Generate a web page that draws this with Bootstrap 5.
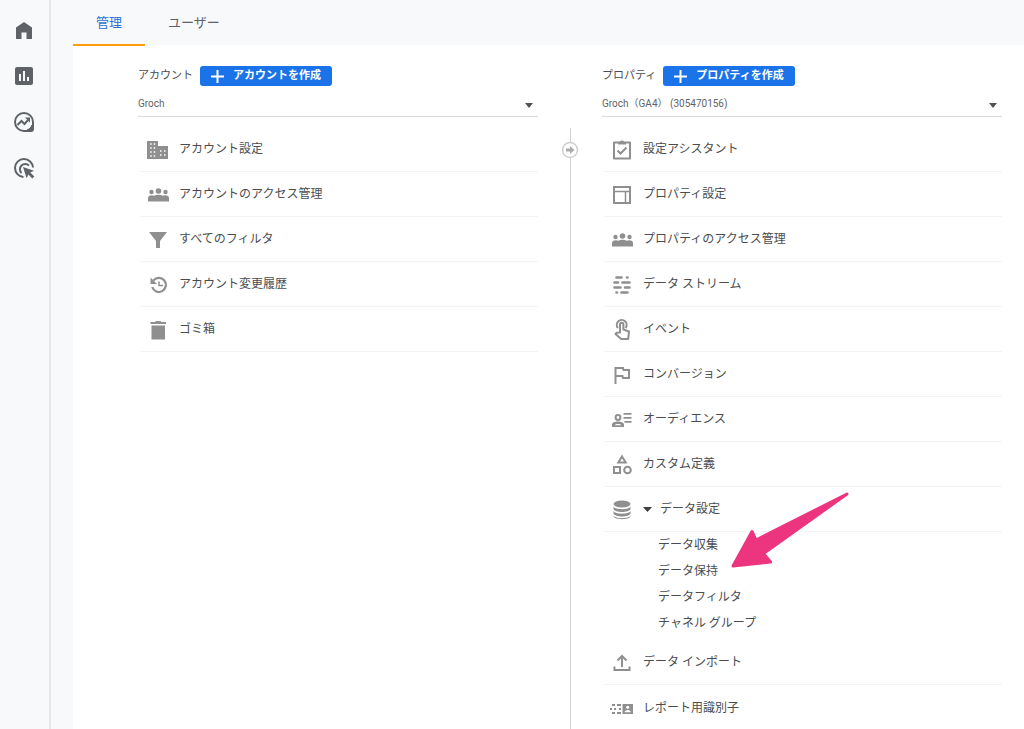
<!DOCTYPE html>
<html lang="ja">
<head>
<meta charset="utf-8">
<meta name="viewport" content="width=device-width, initial-scale=1">
<title>管理</title>
<link href="https://cdn.jsdelivr.net/npm/bootstrap@5.3.0/dist/css/bootstrap.min.css" rel="stylesheet">
<style>
  body { font-family: Roboto, "Noto Sans CJK JP", sans-serif; font-size: 12px; color: #4a4d50; background: #f8f9fb; }
  a { color: inherit; text-decoration: none; }
  svg { display: block; flex: none; }
  .side-rail { width: 51px; border-right: 2px solid #e4e6e9; color: #5f6368; padding: 18px 0 0 12px; gap: 22px; }
  .page-tabs { height: 45px; padding-left: 22px; font-size: 13px; }
  .page-tabs .nav-link { height: 46px; color: #5f6266; padding: 13px 23px 0; line-height: 20px; border-radius: 0; }
  .page-tabs .nav-link.active { position: relative; color: #2a72d5; border-bottom: 2px solid #ff9d0a; }
  .admin-panel { margin-left: 22px; padding: 20px 22px 0 65px; display: grid; grid-template-columns: minmax(0,1fr) 64px minmax(0,1fr); }
  .scope-title { height: 22px; font-size: 11px; gap: 7px; }
  .btn-create { height: 20px; width: 132px; padding: 0 0 0 10px; gap: 9px; border-radius: 3px; font-size: 11px; font-weight: 700; line-height: 20px; background: #1a73e8; color: #fff; }
  .btn-create:hover { background: #1765cc; color: #fff; }
  .scope-select { height: 30px; margin-bottom: 10px; padding: 4px 20px 0 0; font-size: 10px; color: #5f6368; border: 0; border-bottom: 1px solid #d8dadd; border-radius: 0;
    background: #fff url("data:image/svg+xml,%3Csvg xmlns='http://www.w3.org/2000/svg' viewBox='0 0 8 5'%3E%3Cpath d='M0 0h8L4 5z' fill='%23505356'/%3E%3C/svg%3E") no-repeat right 5px top 16px / 8px 5px; }
  .menu-row { height: 45px; padding: 0 0 0 6px; gap: 9px; border-bottom: 1px solid #f3f3f4; line-height: 20px; }
  .menu-list { margin-left: 2px; }
  .menu-list svg.row-icon { width: 24px; height: 24px; fill: #8f8f8f; stroke-width: 2; margin-top: 2px; }
  .caret { width: 9px; height: 5px; fill: #3c4043; }
  .sub-list { padding: 0 0 4px 54px; line-height: 26px; }
  .toggle-row { width: 100%; background: none; border: 0; border-bottom: 1px solid #f3f3f4; color: inherit; text-align: left; }
  .pointer-arrow { position: absolute; left: 72px; top: -68px; }
  .divider-col { margin-top: 63px; }
  .divider-col::before { content: ""; width: 1px; background: #d2d3d5; }
  .btn-move { position: absolute; top: 13px; width: 18px; height: 18px; padding: 0; border: 0; background: none; }
</style>
</head>
<body>
<div class="d-flex min-vh-100">
  <nav class="side-rail d-flex flex-column flex-shrink-0" aria-label="メイン">
    <a href="#" aria-label="ホーム"><svg width="24" height="24" viewBox="0 0 24 24" fill="currentColor"><path d="M4 9.500 12 4l8 5.500V21h-5.500v-6.500h-5V21H4z"/></svg></a>
    <a href="#" aria-label="レポート"><svg width="24" height="24" viewBox="0 0 24 24" fill="currentColor"><path d="M19 3H5a2 2 0 0 0-2 2v14c0 1.100.9 2 2 2h14a2 2 0 0 0 2-2V5a2 2 0 0 0-2-2zM9 17H7v-7h2zm4 0h-2V7h2zm4 0h-2v-4h2z"/></svg></a>
    <a href="#" aria-label="探索"><svg width="24" height="24" viewBox="0 0 24 24" fill="none" stroke="currentColor" stroke-width="2"><path d="M12 21a9 9 0 1 1 9-9v7a2 2 0 0 1-2 2z"/><path d="m5.500 15 4-4 3 3 4-4.500"/><path d="M13 7.500h5v5z" fill="currentColor" stroke="none"/><path d="M20 15v5h-5c2.500-1 4-2.500 5-5z" fill="currentColor" stroke-width="1"/></svg></a>
    <a href="#" aria-label="広告"><svg width="24" height="24" viewBox="0 0 24 24" fill="none" stroke="currentColor" stroke-width="2"><path d="M11.500 21A9 9 0 1 1 21 11.500"/><path d="M9.500 17a5.300 5.300 0 1 1 7.500-7.500"/><path d="m11 11 11 3.700-3.700 1.800 4 4-2 2-4-4-1.700 3.700z" fill="currentColor" stroke="none"/></svg></a>
  </nav>

  <div class="flex-grow-1 d-flex flex-column">
    <nav class="nav page-tabs">
      <a class="nav-link active" href="#" aria-current="page">管理</a>
      <a class="nav-link" href="#">ユーザー</a>
    </nav>

    <main class="admin-panel bg-white flex-grow-1">
      <section>
        <div class="scope-title d-flex align-items-center">
          <label for="account">アカウント</label>
          <button type="button" class="btn btn-create d-flex align-items-center"><svg width="13" height="13" viewBox="0 0 13 13" stroke="#fff" stroke-width="2"><path d="M6.500 0v13M0 6.500h13"/></svg>アカウントを作成</button>
        </div>
        <select id="account" class="form-select scope-select"><option>Groch</option></select>
        <ul class="menu-list list-unstyled mb-0">
          <li><a href="#" class="menu-row d-flex align-items-center"><svg class="row-icon" viewBox="0 0 24 24"><path fill-rule="evenodd" d="M1 3h11v5h10v13H1zM4.200 5.200v1.500h1.500V5.200zm3.500 0v1.500h1.500V5.200zM4.200 9.200v1.500h1.500V9.200zm3.500 0v1.500h1.500V9.200zM4.200 13.200v1.500h1.500v-1.500zm3.500 0v1.500h1.500v-1.500zM4.200 17.200v1.500h1.500v-1.500zm3.500 0v1.500h1.500v-1.500zM14 12.200v1.500h1.500v-1.500zm4 0v1.500h1.500v-1.500zm-4 4v1.500h1.500v-1.500zm4 0v1.500h1.500v-1.500z"/></svg>アカウント設定</a></li>
          <li><a href="#" class="menu-row d-flex align-items-center"><svg class="row-icon" viewBox="0 0 24 24"><circle cx="5.500" cy="9" r="2.200"/><circle cx="12.500" cy="8" r="2.800"/><circle cx="19.500" cy="9" r="2.200"/><path d="M2 18.500V15c0-2 2-2.700 4-2.700 1 0 1.500.2 2.200.4 2.600-1.300 6-1.300 8.600 0 .7-.2 1.200-.4 2.200-.4 2 0 4 .7 4 2.700v3.500z"/></svg>アカウントのアクセス管理</a></li>
          <li><a href="#" class="menu-row d-flex align-items-center"><svg class="row-icon" viewBox="0 0 24 24"><path d="M3 4h18l-7 9v7h-4v-7z"/></svg>すべてのフィルタ</a></li>
          <li><a href="#" class="menu-row d-flex align-items-center"><svg class="row-icon" viewBox="0 0 24 24"><path d="M7.500 7.500A7 7 0 1 1 6.200 14" fill="none" stroke="#8f8f8f" stroke-width="2.200"/><path d="M4.500 4.500V11H11z"/><path d="M13 8.500v4h4" fill="none" stroke="#8f8f8f" stroke-width="1.500"/></svg>アカウント変更履歴</a></li>
          <li><a href="#" class="menu-row d-flex align-items-center"><svg class="row-icon" viewBox="0 0 24 24"><path d="M5.500 7.500h13.500V21.500H5.500zM4.500 4H9l1-1h4.500l1 1h4.500v2h-15.500z"/></svg>ゴミ箱</a></li>
        </ul>
      </section>

      <div class="divider-col position-relative d-flex justify-content-center">
        <button type="button" class="btn-move" aria-label="移動"><svg width="18" height="18" viewBox="0 0 18 18"><circle cx="9" cy="9" r="7.500" fill="#fff" stroke="#cfcfcf" stroke-width="1.500"/><path d="M5 7.500h4V5l4.500 4L9 13v-2.500H5z" fill="#ababab"/></svg></button>
      </div>

      <section>
        <div class="scope-title d-flex align-items-center">
          <label for="property">プロパティ</label>
          <button type="button" class="btn btn-create d-flex align-items-center"><svg width="13" height="13" viewBox="0 0 13 13" stroke="#fff" stroke-width="2"><path d="M6.500 0v13M0 6.500h13"/></svg>プロパティを作成</button>
        </div>
        <select id="property" class="form-select scope-select"><option>Groch（GA4） (305470156)</option></select>
        <ul class="menu-list list-unstyled mb-0">
          <li><a href="#" class="menu-row d-flex align-items-center"><svg class="row-icon" viewBox="0 0 24 24"><path d="M4 4.500h16V20.500H4z" fill="none" stroke="#8f8f8f" stroke-linejoin="round"/><path d="M8 4.500h1.200a3 3 0 0 1 5.600 0H16v2H8z"/><path d="m7.500 12.500 3 3 6-6" fill="none" stroke="#8f8f8f"/></svg>設定アシスタント</a></li>
          <li><a href="#" class="menu-row d-flex align-items-center"><svg class="row-icon" viewBox="0 0 24 24"><path fill="none" stroke="#8f8f8f" d="M4 4h16v16H4z"/><path fill="none" stroke="#8f8f8f" stroke-width="1.500" d="M4 8.500h16M15.500 8.500V20"/></svg>プロパティ設定</a></li>
          <li><a href="#" class="menu-row d-flex align-items-center"><svg class="row-icon" viewBox="0 0 24 24"><circle cx="5.500" cy="9" r="2.200"/><circle cx="12.500" cy="8" r="2.800"/><circle cx="19.500" cy="9" r="2.200"/><path d="M2 18.500V15c0-2 2-2.700 4-2.700 1 0 1.500.2 2.200.4 2.600-1.300 6-1.300 8.600 0 .7-.2 1.200-.4 2.200-.4 2 0 4 .7 4 2.700v3.500z"/></svg>プロパティのアクセス管理</a></li>
          <li><a href="#" class="menu-row d-flex align-items-center"><svg class="row-icon" viewBox="0 0 24 24"><g fill="none" stroke="#8f8f8f" stroke-linecap="round" style="stroke-width:2.600"><path d="M6.500 4.500h5M17 4.500h.5M4.500 9.500H8M12.500 9.500h7M4.500 14.500h6M15 14.500h4.500M6.500 19.500H7M11.500 19.500h6"/></g></svg>データ ストリーム</a></li>
          <li><a href="#" class="menu-row d-flex align-items-center"><svg class="row-icon" viewBox="0 0 24 24"><path fill="none" stroke="#8f8f8f" stroke-linejoin="round" d="M10 14.500V6.500a1.700 1.700 0 0 1 3.400 0v5l5.600 2-.8 7.500h-7L5.500 16l1-1.200z"/><path fill="none" stroke="#8f8f8f" d="M7.900 10a4.900 4.900 0 1 1 7.600 0"/></svg>イベント</a></li>
          <li><a href="#" class="menu-row d-flex align-items-center"><svg class="row-icon" viewBox="0 0 24 24"><path fill="none" stroke="#8f8f8f" d="M5.500 21V5h7.500l.5 2H19v8h-6l-.5-2H6"/></svg>コンバージョン</a></li>
          <li><a href="#" class="menu-row d-flex align-items-center"><svg class="row-icon" viewBox="0 0 24 24"><circle cx="8" cy="9.500" r="2.400" fill="none" stroke="#8f8f8f"/><path fill-rule="evenodd" d="M2 19v-2.500c0-4 12-4 12 0V19zm2.500-1.800h7c-1-1.600-6-1.600-7 0zM13.500 5h8v1.800h-8zM13.500 9h8v1.800h-8zM14.500 13h7v1.800h-7z"/></svg>オーディエンス</a></li>
          <li><a href="#" class="menu-row d-flex align-items-center"><svg class="row-icon" viewBox="0 0 24 24"><path fill="none" stroke="#8f8f8f" d="M12 3.500 15.700 9.500H8.300zM4 14h6v6H4z"/><circle cx="17.500" cy="17" r="3.300" fill="none" stroke="#8f8f8f"/></svg>カスタム定義</a></li>
          <li>
            <button type="button" class="toggle-row menu-row d-flex align-items-center" aria-expanded="true"><svg class="row-icon" viewBox="0 0 24 24"><ellipse cx="12" cy="6" rx="8.500" ry="3.500"/><path d="M3.500 8.500c1 3.500 16 3.500 17 0V11c-1 4-16 4-17 0zM3.500 13c1 3.500 16 3.500 17 0v2.500c-1 4-16 4-17 0zM3.500 17.500c1 3.500 16 3.500 17 0V18.500c-1 3.500-16 3.500-17 0z"/></svg><span class="d-flex align-items-center gap-2"><svg class="caret" viewBox="0 0 9 5"><path d="M0 0h9L4.500 5z"/></svg>データ設定</span></button>
            <ul class="sub-list list-unstyled">
              <li><a href="#">データ収集</a></li>
              <li class="position-relative"><a href="#">データ保持</a><svg class="pointer-arrow" width="120" height="80" viewBox="0 0 120 80" aria-hidden="true"><path fill="#ed347f" stroke="#ed347f" stroke-width="3" stroke-linejoin="round" d="M3 76 22 41.500 26 50 117 4 33.500 63.500 40.500 72z"/></svg></li>
              <li><a href="#">データフィルタ</a></li>
              <li><a href="#">チャネル グループ</a></li>
            </ul>
          </li>
          <li><a href="#" class="menu-row d-flex align-items-center"><svg class="row-icon" viewBox="0 0 24 24"><path fill="none" stroke="#8f8f8f" d="M12 16V5M7.500 9.500 12 5l4.500 4.500M4.500 15.500V19h15v-3.500"/></svg>データ インポート</a></li>
          <li><a href="#" class="menu-row d-flex align-items-center border-0"><svg class="row-icon" viewBox="0 0 24 24"><path fill="none" stroke="#8f8f8f" d="M2 8h3M7 8h4M0 12h2M4 12h2M9 12h2M2 16h3M7 16h4"/><path fill-rule="evenodd" d="M12.500 7H23v10H12.500zm5.200 1.700a1.600 1.600 0 1 0 .01 0zM14.500 15.300h6.500c-.5-3-6-3-6.500 0z"/></svg>レポート用識別子</a></li>
        </ul>
      </section>
    </main>
  </div>
</div>
<script src="https://cdn.jsdelivr.net/npm/bootstrap@5.3.0/dist/js/bootstrap.bundle.min.js"></script>
</body>
</html>
